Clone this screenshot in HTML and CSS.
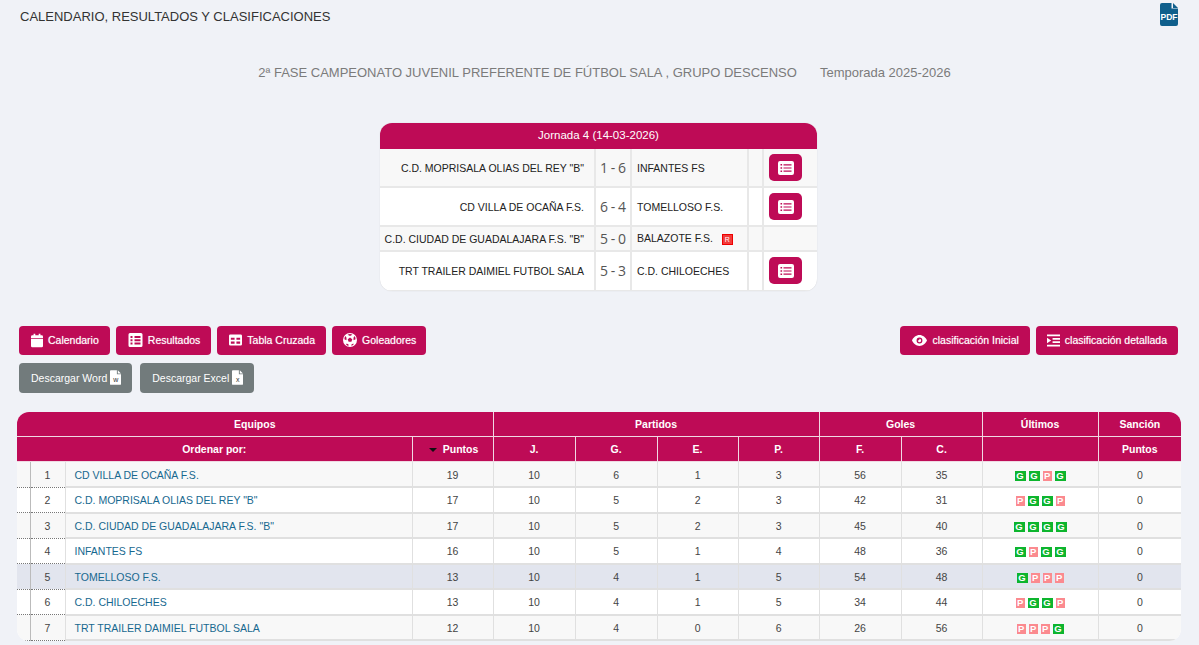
FILE: index.html
```html
<!DOCTYPE html>
<html lang="es">
<head>
  <meta charset="UTF-8">
  <title>Calendario, resultados y clasificaciones</title>
  <link rel="stylesheet" href="styles.css">
</head>
<body>
  <svg class="sprites" width="0" height="0" aria-hidden="true">
    <symbol id="i-list" viewBox="0 0 16 14"><path fill-rule="evenodd" d="M2 0h12a2 2 0 0 1 2 2v10a2 2 0 0 1-2 2H2a2 2 0 0 1-2-2V2a2 2 0 0 1 2-2zM2.500 3v1.600h1.600V3zm3 .2v1.200h8V3.200zM2.500 6.200v1.600h1.600V6.200zm3 .2v1.200h8V6.400zM2.500 9.400V11h1.600V9.400zm3 .2v1.200h8V9.600z"/></symbol>
    <symbol id="i-cal" viewBox="0 0 14 16"><path d="M3 0h2v2h4V0h2v2h1.500A1.500 1.500 0 0 1 14 3.500V5H0V3.500A1.500 1.500 0 0 1 1.500 2H3zM0 6h14v8.500a1.500 1.500 0 0 1-1.500 1.500h-11A1.500 1.500 0 0 1 0 14.500z"/></symbol>
    <symbol id="i-res" viewBox="0 0 14 14"><path fill-rule="evenodd" d="M1.500 0h11A1.500 1.500 0 0 1 14 1.500v11a1.500 1.500 0 0 1-1.500 1.500h-11A1.500 1.500 0 0 1 0 12.500v-11A1.500 1.500 0 0 1 1.500 0zM2 3v2h2V3zm4 0v2h6V3zM2 6.200v2h2v-2zm4 0v2h6v-2zM2 9.400v2h2v-2zm4 0v2h6v-2z"/></symbol>
    <symbol id="i-tab" viewBox="0 0 14 12"><path fill-rule="evenodd" d="M1.500 0h11A1.500 1.500 0 0 1 14 1.500v9a1.500 1.500 0 0 1-1.500 1.500h-11A1.500 1.500 0 0 1 0 10.500v-9A1.500 1.500 0 0 1 1.500 0zM2 3.500v2.300h4V3.500zm6 0v2.300h4V3.500zM2 7.500v2.500h4V7.500zm6 0v2.500h4V7.500z"/></symbol>
    <symbol id="i-ball" viewBox="0 0 16 16"><path fill-rule="evenodd" d="M8 0a8 8 0 1 1 0 16A8 8 0 0 1 8 0zm0 5.200L5.400 7.100l1 3h3.200l1-3zM5.200 1.900 8 3.300l2.800-1.400A6.500 6.500 0 0 0 5.200 1.900zM1.600 7.200l2.300 1 .1-2.900-1.300-1.800a6.500 6.500 0 0 0-1.100 3.700zm12.800 0a6.500 6.500 0 0 0-1.100-3.700L12 5.300l.1 2.900zM3.300 12.400l2.800.2 .1 2.400a6.500 6.500 0 0 1-3-2.400zm9.400 0a6.500 6.500 0 0 1-3 2.400l.2-2.300z"/></symbol>
    <symbol id="i-eye" viewBox="0 0 18 13"><path fill-rule="evenodd" d="M9 0c4 0 7.500 3 9 6.500C16.500 10 13 13 9 13S1.500 10 0 6.500C1.500 3 5 0 9 0zm0 3a3.500 3.500 0 1 0 0 7 3.500 3.500 0 0 0 0-7zm0 1.500a2 2 0 1 1-2 2c.8.300 2.200-.5 2-2z"/></symbol>
    <symbol id="i-ind" viewBox="0 0 14 13"><path d="M0 0h14v2H0zM6 3.700h8v2H6zM6 7.300h8v2H6zM0 11h14v2H0zM0 3.500 4.500 6.500 0 9.500z"/></symbol>
    <symbol id="i-file" viewBox="0 0 12 16"><path d="M1 0h6.500v4.500H12V15a1 1 0 0 1-1 1H1a1 1 0 0 1-1-1V1a1 1 0 0 1 1-1zM8.500 0 12 3.500H8.500z"/></symbol>
  </svg>

  <header class="top">
    <h1>CALENDARIO, RESULTADOS Y CLASIFICACIONES</h1>
    <a class="pdf" href="#">
      <svg viewBox="0 0 18 23" width="18" height="23"><path fill="#0f5f8c" d="M2 0h9.500v5.500H18V21a2 2 0 0 1-2 2H2a2 2 0 0 1-2-2V2a2 2 0 0 1 2-2z"/><path fill="#0f5f8c" d="M13 0l5 5h-5z"/><text x="9" y="17" text-anchor="middle" class="pdf-text">PDF</text></svg>
    </a>
  </header>

  <h2 class="competition"><span>2ª FASE CAMPEONATO JUVENIL PREFERENTE DE FÚTBOL SALA , GRUPO DESCENSO</span><span>Temporada 2025-2026</span></h2>

  <section class="round">
    <div class="round-title">Jornada 4 (14-03-2026)</div>
    <table class="matches">
      <colgroup><col class="c-home"><col class="c-score"><col class="c-away"><col class="c-flag"><col class="c-act"></colgroup>
      <tr class="tall alt"><td class="home">C.D. MOPRISALA OLIAS DEL REY "B"</td><td class="score">1 - 6</td><td>INFANTES FS</td><td></td><td class="act"><a class="act-btn" href="#"><svg width="16" height="14"><use href="#i-list"/></svg></a></td></tr>
      <tr class="tall"><td class="home">CD VILLA DE OCAÑA F.S.</td><td class="score">6 - 4</td><td>TOMELLOSO F.S.</td><td></td><td class="act"><a class="act-btn" href="#"><svg width="16" height="14"><use href="#i-list"/></svg></a></td></tr>
      <tr class="short alt"><td class="home">C.D. CIUDAD DE GUADALAJARA F.S. "B"</td><td class="score">5 - 0</td><td>BALAZOTE F.S. <span class="ret">R</span></td><td></td><td></td></tr>
      <tr class="tall"><td class="home">TRT TRAILER DAIMIEL FUTBOL SALA</td><td class="score">5 - 3</td><td>C.D. CHILOECHES</td><td></td><td class="act"><a class="act-btn" href="#"><svg width="16" height="14"><use href="#i-list"/></svg></a></td></tr>
    </table>
  </section>

  <nav class="toolbar">
    <div class="btn-row">
      <a class="btn" href="#"><svg width="12" height="15"><use href="#i-cal"/></svg>Calendario</a>
      <a class="btn" href="#"><svg width="15" height="14"><use href="#i-res"/></svg>Resultados</a>
      <a class="btn" href="#"><svg width="13" height="12"><use href="#i-tab"/></svg>Tabla Cruzada</a>
      <a class="btn gol" href="#"><svg width="14" height="14"><use href="#i-ball"/></svg>Goleadores</a>
      <span class="spacer"></span>
      <a class="btn" href="#"><svg width="15" height="11"><use href="#i-eye"/></svg>clasificación Inicial</a>
      <a class="btn tight" href="#"><svg width="13" height="13"><use href="#i-ind"/></svg>clasificación detallada</a>
    </div>
    <div class="btn-row second">
      <a class="btn grey" href="#">Descargar Word<span class="doc"><svg width="11" height="15"><use href="#i-file"/></svg><b>w</b></span></a>
      <a class="btn grey" href="#">Descargar Excel<span class="doc"><svg width="11" height="15"><use href="#i-file"/></svg><b>x</b></span></a>
    </div>
  </nav>

  <section class="standings">
    <table>
      <colgroup>
        <col class="s-mark"><col class="s-pos"><col class="s-team"><col class="s-pts">
        <col class="s-w"><col class="s-w"><col class="s-n"><col class="s-n">
        <col class="s-w"><col class="s-n"><col class="s-last"><col class="s-san">
      </colgroup>
      <thead>
        <tr><th colspan="4">Equipos</th><th colspan="4">Partidos</th><th colspan="2">Goles</th><th>Últimos</th><th>Sanción</th></tr>
        <tr><th colspan="3">Ordenar por:</th><th class="sorted"><i class="caret"></i>Puntos</th><th>J.</th><th>G.</th><th>E.</th><th>P.</th><th>F.</th><th>C.</th><th></th><th>Puntos</th></tr>
      </thead>
      <tbody>
        <tr><td class="mark"></td><td class="pos">1</td><td class="team"><a href="#">CD VILLA DE OCAÑA F.S.</a></td><td>19</td><td>10</td><td>6</td><td>1</td><td>3</td><td>56</td><td>35</td><td><i class="g">G</i><i class="g">G</i><i class="p">P</i><i class="g">G</i></td><td>0</td></tr>
        <tr><td class="mark"></td><td class="pos">2</td><td class="team"><a href="#">C.D. MOPRISALA OLIAS DEL REY "B"</a></td><td>17</td><td>10</td><td>5</td><td>2</td><td>3</td><td>42</td><td>31</td><td><i class="p">P</i><i class="g">G</i><i class="g">G</i><i class="p">P</i></td><td>0</td></tr>
        <tr><td class="mark"></td><td class="pos">3</td><td class="team"><a href="#">C.D. CIUDAD DE GUADALAJARA F.S. "B"</a></td><td>17</td><td>10</td><td>5</td><td>2</td><td>3</td><td>45</td><td>40</td><td><i class="g">G</i><i class="g">G</i><i class="g">G</i><i class="g">G</i></td><td>0</td></tr>
        <tr><td class="mark"></td><td class="pos">4</td><td class="team"><a href="#">INFANTES FS</a></td><td>16</td><td>10</td><td>5</td><td>1</td><td>4</td><td>48</td><td>36</td><td><i class="g">G</i><i class="p">P</i><i class="g">G</i><i class="g">G</i></td><td>0</td></tr>
        <tr class="own"><td class="mark"></td><td class="pos">5</td><td class="team"><a href="#">TOMELLOSO F.S.</a></td><td>13</td><td>10</td><td>4</td><td>1</td><td>5</td><td>54</td><td>48</td><td><i class="g">G</i><i class="p">P</i><i class="p">P</i><i class="p">P</i></td><td>0</td></tr>
        <tr><td class="mark"></td><td class="pos">6</td><td class="team"><a href="#">C.D. CHILOECHES</a></td><td>13</td><td>10</td><td>4</td><td>1</td><td>5</td><td>34</td><td>44</td><td><i class="p">P</i><i class="g">G</i><i class="g">G</i><i class="p">P</i></td><td>0</td></tr>
        <tr><td class="mark"></td><td class="pos">7</td><td class="team"><a href="#">TRT TRAILER DAIMIEL FUTBOL SALA</a></td><td>12</td><td>10</td><td>4</td><td>0</td><td>6</td><td>26</td><td>56</td><td><i class="p">P</i><i class="p">P</i><i class="p">P</i><i class="g">G</i></td><td>0</td></tr>
      </tbody>
    </table>
  </section>
</body>
</html>
```

FILE: styles.css
```css
* {
  box-sizing: border-box;
}
html, body {
  height: 645px;
  overflow: hidden;
}
body {
  margin: 0;
  background: #f0f2f7;
  font-family: "Liberation Sans", Arial, sans-serif;
  font-size: 10.5px;
  color: #333;
}
a {
  text-decoration: none;
}
.sprites {
  position: absolute;
}

.top {
  display: flex;
  justify-content: space-between;
  align-items: flex-start;
  padding: 3px 21px 0 20px;
  height: 33px;
}
.top h1 {
  margin: 6px 0 0;
  font-size: 13px;
  font-weight: 400;
  color: #333;
}
.pdf-text {
  font-family: "Liberation Sans", Arial, sans-serif;
  font-size: 8.500px;
  font-weight: 700;
  fill: #fff;
}

.competition {
  display: flex;
  justify-content: center;
  gap: 23px;
  margin: 32px 0 0;
  padding-left: 10px;
  font-size: 13px;
  line-height: 16px;
  font-weight: 400;
  color: #7b7b7b;
}

.round {
  width: 437px;
  margin: 42px 0 0 380px;
  border-radius: 12px;
  overflow: hidden;
  background: #fff;
  box-shadow: 0 0 1px rgba(0,0,0,0.2);
}
.round-title {
  height: 26px;
  line-height: 25px;
  text-align: center;
  background: #be0b56;
  color: #fff;
  font-size: 11.500px;
}
.matches {
  width: 100%;
  border-collapse: collapse;
  table-layout: fixed;
  color: #222;
}
.c-home { width: 215px; }
.c-score { width: 36px; }
.c-away { width: 117px; }
.c-flag { width: 15px; }
.c-act { width: 54px; }
.matches td {
  border: 2px solid #e8e8e8;
  border-top: 0;
  padding: 0 5px;
}
.matches td:first-child {
  border-left: 0;
}
.matches td:last-child {
  border-right: 0;
}
.matches tr:last-child td {
  border-bottom: 1px solid #e8e8e8;
}
.matches .tall {
  height: 39px;
}
.matches tr:first-child {
  height: 38px;
}
.matches .short {
  height: 25px;
}
.matches .alt {
  background: #f8f8f8;
}
.matches .home {
  text-align: right;
  padding: 0 10px 0 0;
  white-space: nowrap;
}
.matches .score {
  padding: 0;
  text-align: center;
  font-family: "Open Sans", Arial, sans-serif;
  font-size: 14px;
  word-spacing: -1px;
  color: #555;
}
.matches .act {
  padding: 0 0 0 5px;
}
.act-btn {
  display: inline-flex;
  align-items: center;
  justify-content: center;
  width: 33px;
  height: 27px;
  vertical-align: middle;
  border-radius: 5px;
  background: #be0b56;
  fill: #fff;
}
.ret {
  display: inline-block;
  width: 11px;
  height: 11px;
  margin-left: 6px;
  line-height: 9px;
  text-align: center;
  font-size: 7px;
  color: #fff;
  background: #f23b3b;
  border: 1px solid #e00;
}

.toolbar {
  margin-top: 35px;
  padding: 0 21px 0 19px;
}
.btn-row {
  display: flex;
  gap: 6px;
}
.btn-row.second {
  gap: 8px;
  margin-top: 8px;
}
.spacer {
  flex: 1;
}
.btn {
  display: inline-flex;
  align-items: center;
  gap: 5px;
  height: 29px;
  padding: 0 11px 0 12px;
  border-radius: 4px;
  background: #be0b56;
  color: #fff;
  fill: #fff;
  font-size: 10.5px;
  text-shadow: 0 0 1px rgba(255,255,255,0.6);
}
.btn.tight {
  padding-left: 11px;
}
.btn.gol {
  padding: 0 10px 0 11px;
}
.btn.grey {
  height: 30px;
  gap: 3px;
  background: #727b7c;
  text-shadow: none;
}
.doc {
  position: relative;
  display: inline-flex;
  width: 11px;
  height: 15px;
}
.doc b {
  position: absolute;
  left: 0;
  right: 0;
  bottom: 1px;
  text-align: center;
  font-size: 7px;
  line-height: 8px;
  font-weight: 400;
  color: #333;
}

.standings {
  width: 1164px;
  margin: 19px 0 0 17px;
  border-radius: 12px;
  overflow: hidden;
  background: #fff;
}
.standings table {
  width: 100%;
  border-collapse: collapse;
  table-layout: fixed;
}
.s-mark { width: 13px; }
.s-pos { width: 35px; }
.s-team { width: 347px; }
.s-pts { width: 81px; }
.s-w { width: 82px; }
.s-n { width: 81px; }
.s-last { width: 116px; }
.s-san { width: 83px; }
.standings th {
  height: 25px;
  background: #be0b56;
  color: #fff;
  font-size: 10.5px;
  font-weight: 700;
  text-align: center;
  border: 1px solid #f0d9e3;
  border-top: 0;
}
.standings th:first-child {
  border-left: 0;
}
.standings th:last-child {
  border-right: 0;
}
.standings th.sorted {
  padding-left: 3px;
}
.standings td {
  height: 25.5px;
  padding: 1px 0 0;
  text-align: center;
  color: #444;
  border: 1px solid #e0e0e0;
  border-top: 0;
  border-bottom-width: 2px;
}
.standings td:first-child {
  border-left: 0;
}
.standings td:last-child {
  border-right: 0;
}
.standings tbody tr:nth-child(odd) {
  background: #f8f8f8;
}
.standings tbody tr.own {
  background: #e2e5ee;
}
.standings td.mark {
  border-bottom: 1px dotted #777;
  border-right-color: #bbb;
}
.standings td.pos {
  border-bottom: 1px dotted #777;
}
.standings td.team {
  text-align: left;
  padding-left: 9px;
}
.team a {
  color: #17688f;
}
.caret {
  display: inline-block;
  margin-right: 6px;
  vertical-align: 1px;
  border-left: 4px solid transparent;
  border-right: 4px solid transparent;
  border-top: 4px solid #111;
}
td i {
  display: inline-block;
  height: 10px;
  margin: 0 1.500px;
  line-height: 10px;
  font-size: 9.500px;
  font-style: normal;
  font-weight: 700;
  text-align: center;
  vertical-align: middle;
  color: #fff;
}
td i.g {
  width: 11px;
  background: #0db52e;
}
td i.p {
  width: 9px;
  background: #fb8a8f;
}
```
